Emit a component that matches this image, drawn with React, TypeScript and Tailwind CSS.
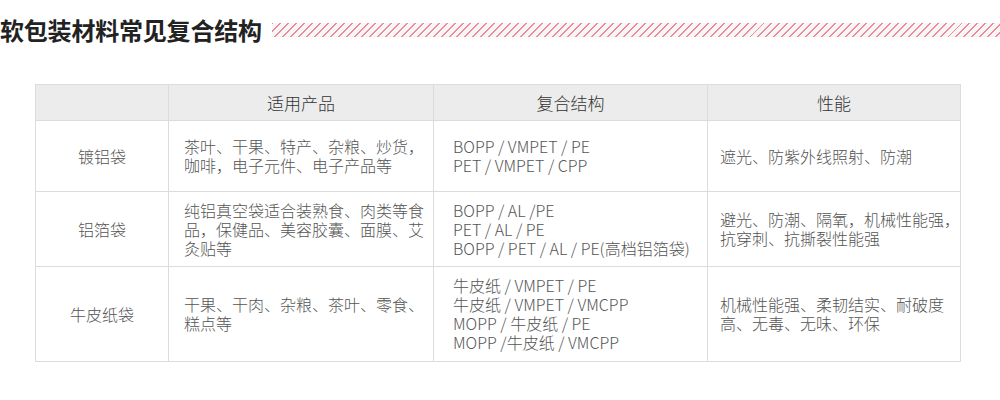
import React from "react";

type Row = { name: string; products: string[]; structure: string[]; perf: string[] };

const rows: Row[] = [
  {
    name: "镀铝袋",
    products: ["茶叶、干果、特产、杂粮、炒货，", "咖啡，电子元件、电子产品等"],
    structure: ["BOPP / VMPET / PE", "PET / VMPET / CPP"],
    perf: ["遮光、防紫外线照射、防潮"],
  },
  {
    name: "铝箔袋",
    products: ["纯铝真空袋适合装熟食、肉类等食", "品，保健品、美容胶囊、面膜、艾", "灸贴等"],
    structure: ["BOPP / AL /PE", "PET / AL / PE", "BOPP / PET / AL / PE(高档铝箔袋)"],
    perf: ["避光、防潮、隔氧，机械性能强，", "抗穿刺、抗撕裂性能强"],
  },
  {
    name: "牛皮纸袋",
    products: ["干果、干肉、杂粮、茶叶、零食、", "糕点等"],
    structure: ["牛皮纸 / VMPET / PE", "牛皮纸 / VMPET / VMCPP", "MOPP / 牛皮纸 / PE", "MOPP /牛皮纸 / VMCPP"],
    perf: ["机械性能强、柔韧结实、耐破度", "高、无毒、无味、环保"],
  },
];

const rowH = ["h-[71px]", "h-[75px]", "h-[95px]"];

function Lines({ lines }: { lines: string[] }) {
  return (
    <div className="flex flex-col">
      {lines.map((l, i) => (
        <span key={i} className="whitespace-nowrap">
          {l}
        </span>
      ))}
    </div>
  );
}

export default function App() {
  return (
    <div
      className="w-[1000px] h-[400px] bg-white overflow-hidden"
      style={{ fontFamily: '"Noto Sans CJK SC", "Noto Sans", sans-serif' }}
    >
      <div className="pt-[14px] flex items-center h-[46px]">
        <h1 className="text-[24px] leading-[32px] font-bold text-[#222] whitespace-nowrap tracking-[-0.2px]">
          软包装材料常见复合结构
        </h1>
        <div className="ml-[10px] flex-1 h-[14px] bg-[repeating-linear-gradient(135deg,#f2899a_0px,#f2899a_1.4px,#f6f6f6_1.4px,#f6f6f6_5.6px)]" />
      </div>

      <div className="ml-[35px] mt-[38px] w-[926px] border-t border-l border-[#dcdcdc] grid grid-cols-[133px_265px_274px_253px] text-[16px] leading-[19px] font-light text-[#555]">
        <div className="h-[36px] bg-[#ececec] border-r border-b border-[#dcdcdc]" />
        <div className="h-[36px] bg-[#ececec] border-r border-b border-[#dcdcdc] flex items-center justify-center text-[17px] text-[#333]">
          适用产品
        </div>
        <div className="h-[36px] bg-[#ececec] border-r border-b border-[#dcdcdc] flex items-center justify-center text-[17px] text-[#333]">
          复合结构
        </div>
        <div className="h-[36px] bg-[#ececec] border-r border-b border-[#dcdcdc] flex items-center justify-center text-[17px] text-[#333]">
          性能
        </div>

        {rows.map((r, i) => (
          <React.Fragment key={r.name}>
            <div className={`${rowH[i]} border-r border-b border-[#dcdcdc] flex items-center justify-center`}>
              {r.name}
            </div>
            <div className={`${rowH[i]} border-r border-b border-[#dcdcdc] flex items-center pl-[15px]`}>
              <Lines lines={r.products} />
            </div>
            <div className={`${rowH[i]} border-r border-b border-[#dcdcdc] flex items-center pl-[19px]`}>
              <Lines lines={r.structure} />
            </div>
            <div className={`${rowH[i]} border-r border-b border-[#dcdcdc] flex items-center pl-[12px]`}>
              <Lines lines={r.perf} />
            </div>
          </React.Fragment>
        ))}
      </div>
    </div>
  );
}
